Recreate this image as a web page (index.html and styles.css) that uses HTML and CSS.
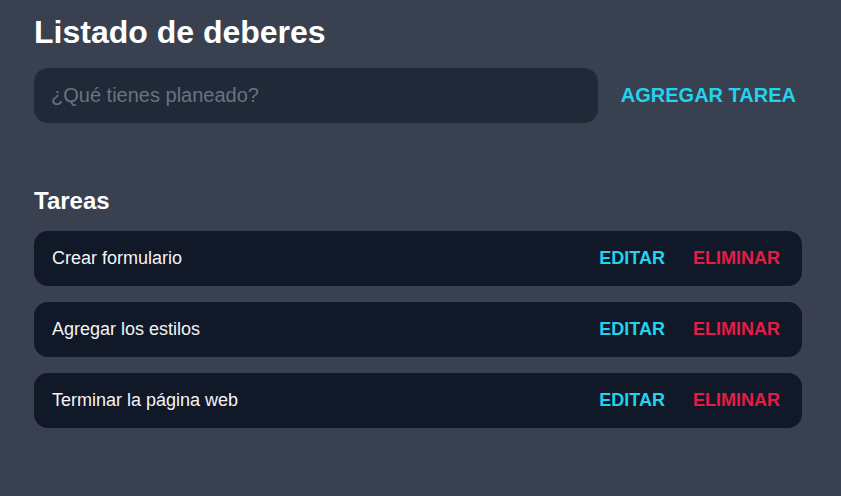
FILE: index.html
```html
<!DOCTYPE html>
<html lang="es">
<head>
<meta charset="utf-8">
<title>Listado de deberes</title>
<link rel="stylesheet" href="styles.css">
</head>
<body>
<main class="app">
  <h1 class="title">Listado de deberes</h1>
  <form class="new-task">
    <input class="new-task__input" type="text" placeholder="¿Qué tienes planeado?">
    <button class="new-task__btn" type="button">AGREGAR TAREA</button>
  </form>
  <h2 class="subtitle">Tareas</h2>
  <ul class="tasks">
    <li class="task">
      <span class="task__text">Crear formulario</span>
      <div class="task__actions">
        <button class="btn btn--edit" type="button">EDITAR</button>
        <button class="btn btn--delete" type="button">ELIMINAR</button>
      </div>
    </li>
    <li class="task">
      <span class="task__text">Agregar los estilos</span>
      <div class="task__actions">
        <button class="btn btn--edit" type="button">EDITAR</button>
        <button class="btn btn--delete" type="button">ELIMINAR</button>
      </div>
    </li>
    <li class="task">
      <span class="task__text">Terminar la página web</span>
      <div class="task__actions">
        <button class="btn btn--edit" type="button">EDITAR</button>
        <button class="btn btn--delete" type="button">ELIMINAR</button>
      </div>
    </li>
  </ul>
</main>
</body>
</html>
```

FILE: styles.css
```css
* { box-sizing: border-box; }
html, body {
  margin: 0;
  height: 100%;
  background: #394151;
  font-family: "Liberation Sans", Arial, sans-serif;
  color: #ffffff;
}
.app {
  padding: 12px 39px 0 34px;
}
.title {
  margin: 0;
  font-size: 32px;
  line-height: 40px;
  font-weight: 700;
}
.new-task {
  display: flex;
  align-items: center;
  gap: 15px;
  margin-top: 16px;
}
.new-task__input {
  flex: 1;
  height: 55px;
  border: none;
  outline: none;
  border-radius: 14px;
  background: #1f2937;
  padding: 0 17px;
  font-family: inherit;
  font-size: 20px;
  color: #e5e7eb;
}
.new-task__input::placeholder { color: #6b7280; }
.new-task__btn {
  background: none;
  border: none;
  padding: 0 6px 0 8px;
  font-family: inherit;
  font-size: 20px;
  font-weight: 700;
  color: #22d3ee;
  cursor: pointer;
}
.subtitle {
  margin: 62px 0 0;
  font-size: 24px;
  line-height: 32px;
  font-weight: 700;
}
.tasks {
  list-style: none;
  margin: 14px 0 0;
  padding: 0;
  display: flex;
  flex-direction: column;
  gap: 16px;
}
.task {
  display: flex;
  align-items: center;
  justify-content: space-between;
  height: 55px;
  padding: 0 22px 0 18px;
  border-radius: 14px;
  background: #111827;
}
.task__text {
  font-size: 18px;
  color: #f3f4f6;
}
.task__actions {
  display: flex;
  gap: 28px;
}
.btn {
  background: none;
  border: none;
  padding: 0;
  font-family: inherit;
  font-size: 18px;
  font-weight: 700;
  cursor: pointer;
}
.btn--edit { color: #22d3ee; }
.btn--delete { color: #e11d48; }
```
